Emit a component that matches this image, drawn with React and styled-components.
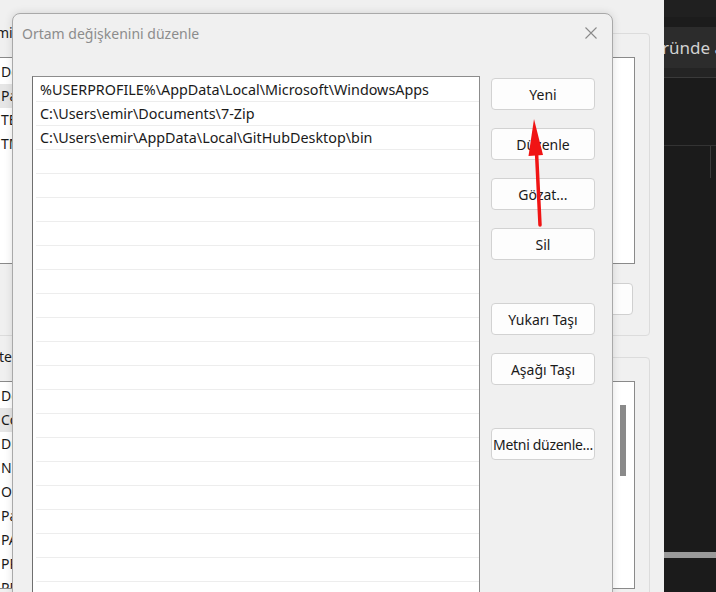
import styled, { createGlobalStyle } from 'styled-components';

const GlobalStyle = createGlobalStyle`
  html, body {
    margin: 0;
    padding: 0;
    background: #f0f0f0;
    overflow: hidden;
  }
  body {
    font-family: "Noto Sans", "Liberation Sans", sans-serif;
    color: #1a1a1a;
  }
`;

const Screen = styled.div`
  position: relative;
  display: flex;
  width: 716px;
  height: 592px;
  overflow: hidden;
`;

/* the environment variables window behind the dialog */
const BackWindow = styled.div`
  flex: 0 0 684px;
  margin-left: -20px;
  box-sizing: border-box;
  padding: 33px 14px 0 6px;
  display: flex;
  flex-direction: column;
  gap: 21px;
  background: #f0f0f0;
`;

const Group = styled.div`
  position: relative;
  flex-shrink: 0;
  box-sizing: border-box;
  height: ${p => p.$height}px;
  padding: 23px 14px 0 9px;
  border: 1px solid #dcdcdc;
  border-radius: 4px;
  display: flex;
  flex-direction: column;
`;

const GroupLabel = styled.span`
  position: absolute;
  top: -11px;
  left: ${p => p.$indent}px;
  padding: 0 3px;
  background: #f0f0f0;
  font-size: 14px;
  line-height: 20px;
  white-space: nowrap;
`;

const BackList = styled.div`
  flex-shrink: 0;
  height: ${p => p.$height}px;
  box-sizing: border-box;
  padding-top: 2px;
  border: 1px solid #8a8a8a;
  background: #fff;
  display: flex;
  overflow: hidden;
`;

const BackRows = styled.div`
  flex: 1;
  min-width: 0;
`;

const BackRow = styled.div`
  display: flex;
  height: 24px;
  line-height: 24px;
  font-size: 14px;
  white-space: nowrap;
`;

const NameCell = styled.div`
  flex: 0 0 170px;
  padding-left: 4px;
  background: ${p => (p.$selected ? '#e6e6e6' : 'transparent')};
`;

const ScrollTrack = styled.div`
  flex: 0 0 14px;
  margin-right: 4px;
  display: flex;
  justify-content: center;
`;

const ScrollThumb = styled.div`
  width: 6px;
  height: 71px;
  margin-top: 21px;
  background: #8a8a8a;
`;

const BackButtonRow = styled.div`
  margin-top: 19px;
  padding-right: 2px;
  display: flex;
  justify-content: flex-end;
  gap: 8px;
`;

const BackButton = styled.div`
  width: 104px;
  height: 32px;
  box-sizing: border-box;
  border: 1px solid #d0d0d0;
  border-radius: 4px;
  background: #fdfdfd;
`;

/* dark app to the right */
const DarkPane = styled.div`
  flex: 1;
  min-width: 0;
  background: #1b1b1b;
  display: flex;
  flex-direction: column;
  overflow: hidden;
`;

const DarkStrip = styled.div`
  flex: 0 0 ${p => p.$h}px;
  background: ${p => p.$bg};
`;

const SearchBand = styled.div`
  flex: 0 0 41px;
  background: #2c2c2c;
  color: #d2d2d2;
  font-size: 17px;
  line-height: 41px;
  white-space: nowrap;
  text-indent: -2px;
`;

const DarkHeader = styled.div`
  flex: 0 0 67px;
  border-top: 1px solid #3a3a3a;
  border-bottom: 1px solid #333;
`;

const DarkCells = styled.div`
  flex: 0 0 406px;
  display: grid;
  grid-template-columns: 47px 1fr;
`;

const DarkCell = styled.div`
  border-right: ${p => (p.$divider ? '1px solid #3a3a3a' : 'none')};
  height: 32px;
`;

const DarkBar = styled.div`
  flex: 0 0 6px;
  background: #9a9a9a;
`;

/* front dialog */
const Dialog = styled.div`
  position: absolute;
  left: 12px;
  top: 13px;
  width: 601px;
  height: 640px;
  box-sizing: border-box;
  border: 1px solid #a9a9a9;
  border-radius: 8px 8px 0 0;
  background: #f0f0f0;
  box-shadow: 0 0 8px rgba(0, 0, 0, 0.12);
  display: flex;
  flex-direction: column;
`;

const TitleBar = styled.div`
  flex: 0 0 38px;
  display: flex;
  align-items: center;
  justify-content: space-between;
  padding-left: 9px;
`;

const Title = styled.span`
  font-size: 14px;
  color: #8c8c8c;
`;

const CloseButton = styled.div`
  width: 42px;
  height: 38px;
  display: flex;
  align-items: center;
  justify-content: center;
`;

const DialogBody = styled.div`
  display: flex;
  gap: 11px;
  padding: 24px 0 0 19px;
`;

const PathList = styled.div`
  width: 448px;
  height: 560px;
  box-sizing: border-box;
  border: 1px solid #8c8c8c;
  border-left-color: #6f6f6f;
  padding: 1px 0 0 3px;
  background: #fff;
  overflow: hidden;
`;

const PathRow = styled.div`
  height: 24px;
  box-sizing: border-box;
  border-bottom: 1px solid #ededed;
  padding-left: 4px;
  line-height: 23px;
  font-size: 14.35px;
  white-space: nowrap;
`;

const ButtonColumn = styled.div`
  padding-top: 2px;
  display: flex;
  flex-direction: column;
  gap: 43px;
`;

const ButtonGroup = styled.div`
  display: flex;
  flex-direction: column;
  gap: 18px;
`;

const Button = styled.div`
  width: 104px;
  height: 32px;
  box-sizing: border-box;
  border: 1px solid #d2d2d2;
  border-radius: 4px;
  background: #fdfdfd;
  display: flex;
  align-items: center;
  justify-content: center;
  font-size: 14px;
  white-space: nowrap;
  letter-spacing: ${p => (p.$tight ? '-0.3px' : '0')};
`;

const Annotation = styled.svg`
  position: absolute;
  left: 0;
  top: 0;
  pointer-events: none;
`;

const paths = [
  '%USERPROFILE%\\AppData\\Local\\Microsoft\\WindowsApps',
  'C:\\Users\\emir\\Documents\\7-Zip',
  'C:\\Users\\emir\\AppData\\Local\\GitHubDesktop\\bin',
];

const userVars = [
  { name: 'Değişken', selected: false },
  { name: 'Path', selected: true },
  { name: 'TEMP', selected: false },
  { name: 'TMP', selected: false },
];

const systemVars = [
  { name: 'Değişken', selected: false },
  { name: 'ComSpec', selected: true },
  { name: 'DriverData', selected: false },
  { name: 'NUMBER_OF_PROCESSORS', selected: false },
  { name: 'OS', selected: false },
  { name: 'Path', selected: false },
  { name: 'PATHEXT', selected: false },
  { name: 'PROCESSOR_ARCHITECTURE', selected: false },
  { name: 'PROCESSOR_IDENTIFIER', selected: false },
];

export default function App() {
  const rows = [...paths, ...Array(20).fill('')];

  return (
    <Screen>
      <GlobalStyle />
      <BackWindow>
        <Group $height={303}>
          <GroupLabel $indent={-2}>emir için kullanıcı değişkenleri</GroupLabel>
          <BackList $height={207}>
            <BackRows>
              {userVars.map(v => (
                <BackRow key={v.name}>
                  <NameCell $selected={v.selected}>{v.name}</NameCell>
                </BackRow>
              ))}
            </BackRows>
          </BackList>
          <BackButtonRow>
            <BackButton />
            <BackButton />
            <BackButton />
          </BackButtonRow>
        </Group>
        <Group $height={300}>
          <GroupLabel $indent={-9}>Sistem değişkenleri</GroupLabel>
          <BackList $height={208}>
            <BackRows>
              {systemVars.map((v, i) => (
                <BackRow key={i}>
                  <NameCell $selected={v.selected}>{v.name}</NameCell>
                </BackRow>
              ))}
            </BackRows>
            <ScrollTrack>
              <ScrollThumb />
            </ScrollTrack>
          </BackList>
        </Group>
      </BackWindow>

      <DarkPane>
        <DarkStrip $h={17} $bg="#202020" />
        <DarkStrip $h={10} $bg="#1c1c1c" />
        <SearchBand>ründe ara</SearchBand>
        <DarkStrip $h={9} $bg="#242424" />
        <DarkHeader />
        <DarkCells>
          <DarkCell $divider />
          <DarkCell />
        </DarkCells>
        <DarkBar />
      </DarkPane>

      <Dialog>
        <TitleBar>
          <Title>Ortam değişkenini düzenle</Title>
          <CloseButton>
            <svg width="14" height="14" viewBox="0 0 14 14">
              <path d="M1.5 1.5 L12.5 12.5 M12.5 1.5 L1.5 12.5" stroke="#8a8a8a" strokeWidth="1.1" fill="none" />
            </svg>
          </CloseButton>
        </TitleBar>
        <DialogBody>
          <PathList>
            {rows.map((p, i) => (
              <PathRow key={i}>{p}</PathRow>
            ))}
          </PathList>
          <ButtonColumn>
            <ButtonGroup>
              <Button>Yeni</Button>
              <Button>Düzenle</Button>
              <Button>Gözat...</Button>
              <Button>Sil</Button>
            </ButtonGroup>
            <ButtonGroup>
              <Button>Yukarı Taşı</Button>
              <Button>Aşağı Taşı</Button>
            </ButtonGroup>
            <ButtonGroup>
              <Button $tight>Metni düzenle...</Button>
            </ButtonGroup>
          </ButtonColumn>
        </DialogBody>
      </Dialog>

      <Annotation width="716" height="592" viewBox="0 0 716 592">
        <path d="M540 225 L536.5 152" stroke="#f01414" strokeWidth="3.5" strokeLinecap="round" fill="none" />
        <polygon points="534,119 528.5,156 543,155" fill="#f01414" />
      </Annotation>
    </Screen>
  );
}
